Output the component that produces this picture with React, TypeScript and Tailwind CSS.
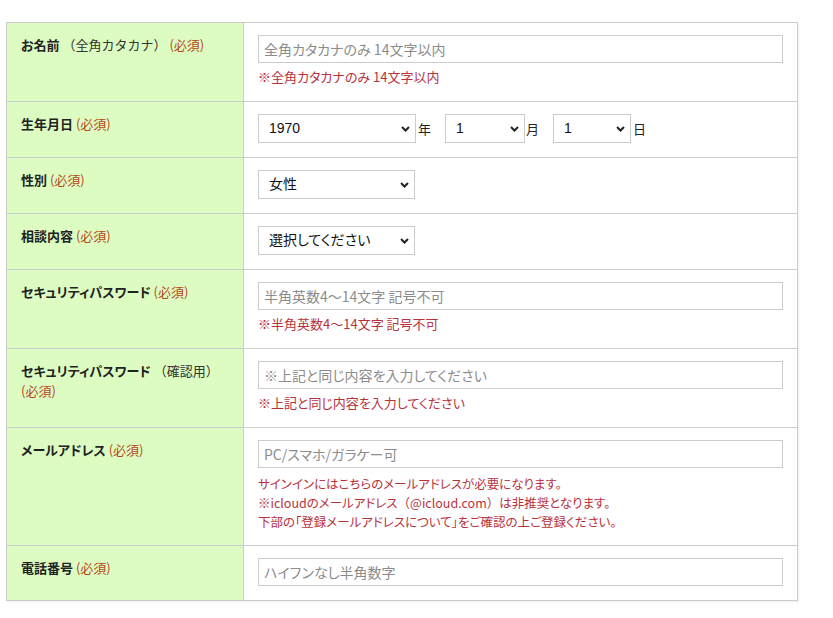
import { ReactNode } from "react";

const jp = "font-['Noto_Sans_CJK_JP',sans-serif] [font-feature-settings:'palt']";

function Required() {
  return <span className="whitespace-nowrap font-normal text-[#b5471f]"> (必須)</span>;
}

function Sub({ children }: { children: ReactNode }) {
  // full-width brackets keep their width here, like the original
  return <span className="font-normal text-[#333] [font-feature-settings:normal]">{children}</span>;
}

function Row({ label, children }: { label: ReactNode; children: ReactNode }) {
  return (
    <>
      <div className="border-r border-b border-[#cccccc] bg-[#dcfcc1] pl-[14px] pr-[14px] pt-[12px] text-[13px] leading-[20px] text-[#222] font-bold">
        {label}
      </div>
      <div className="border-r border-b border-[#cccccc] bg-white pl-[14px] pr-[14px] pt-[12px] pb-[14px]">
        {children}
      </div>
    </>
  );
}

function TextInput({ placeholder }: { placeholder: string }) {
  return (
    <input
      type="text"
      placeholder={placeholder}
      className={`${jp} block h-[28px] w-full border border-[#cccccc] bg-white px-[5px] text-[14px] text-[#333] outline-none placeholder:text-[#8c8c8c]`}
    />
  );
}

function Note({ children }: { children: ReactNode }) {
  return <p className="mt-[4px] text-[13px] leading-[20px] text-[#b8323c]">{children}</p>;
}

function Select({ value, options, width }: { value: string; options: string[]; width: string }) {
  return (
    <div className={`relative h-[29px] ${width}`}>
      <select
        defaultValue={value}
        className="h-full w-full appearance-none border border-[#cccccc] bg-white pl-[10px] pr-[18px] font-['Liberation_Sans','Noto_Sans_CJK_JP',sans-serif] text-[14px] text-[#111] outline-none"
      >
        {options.map((o) => (
          <option key={o}>{o}</option>
        ))}
      </select>
      <svg
        className="pointer-events-none absolute right-[6px] top-1/2 -translate-y-1/2"
        width="9"
        height="6"
        viewBox="0 0 9 6"
      >
        <polyline points="1,1 4.5,4.5 8,1" fill="none" stroke="#222" strokeWidth="2" />
      </svg>
    </div>
  );
}

export default function App() {
  const years = Array.from({ length: 60 }, (_, i) => String(1940 + i));
  const months = Array.from({ length: 12 }, (_, i) => String(i + 1));
  const days = Array.from({ length: 31 }, (_, i) => String(i + 1));

  return (
    <div className={`${jp} min-h-[618px] bg-white pt-[22px] pl-[6px]`}>
      <div className="grid w-[792px] grid-cols-[237px_554px] border-l border-t border-[#cccccc] shadow-[1px_1px_2px_rgba(0,0,0,0.06)]">
        <Row
          label={
            <>
              お名前 <Sub>（全角カタカナ）</Sub>
              <Required />
            </>
          }
        >
          <TextInput placeholder="全角カタカナのみ 14文字以内" />
          <Note>※全角カタカナのみ 14文字以内</Note>
        </Row>

        <Row
          label={
            <>
              生年月日
              <Required />
            </>
          }
        >
          <div className="flex items-center text-[13px] text-[#222]">
            <Select value="1970" options={years} width="w-[158px]" />
            <span className="ml-[2px] mr-[14px]">年</span>
            <Select value="1" options={months} width="w-[80px]" />
            <span className="ml-[1px] mr-[14px]">月</span>
            <Select value="1" options={days} width="w-[78px]" />
            <span className="ml-[2px]">日</span>
          </div>
        </Row>

        <Row
          label={
            <>
              性別
              <Required />
            </>
          }
        >
          <Select value="女性" options={["男性", "女性"]} width="w-[157px]" />
        </Row>

        <Row
          label={
            <>
              相談内容
              <Required />
            </>
          }
        >
          <Select value="選択してください" options={["選択してください", "恋愛", "仕事", "人間関係"]} width="w-[157px]" />
        </Row>

        <Row
          label={
            <>
              セキュリティパスワード
              <Required />
            </>
          }
        >
          <TextInput placeholder="半角英数4～14文字 記号不可" />
          <Note>※半角英数4～14文字 記号不可</Note>
        </Row>

        <Row
          label={
            <>
              セキュリティパスワード <Sub>（確認用）</Sub>
              <Required />
            </>
          }
        >
          <TextInput placeholder="※上記と同じ内容を入力してください" />
          <Note>※上記と同じ内容を入力してください</Note>
        </Row>

        <Row
          label={
            <>
              メールアドレス
              <Required />
            </>
          }
        >
          <TextInput placeholder="PC/スマホ/ガラケー可" />
          <div className="mt-[6px] text-[12.5px] leading-[19px] text-[#b8323c]">
            <p>サインインにはこちらのメールアドレスが必要になります。</p>
            <p>
              ※icloudのメールアドレス
              <span className="[font-feature-settings:normal]">（@icloud.com）</span>
              は非推奨となります。
            </p>
            <p>下部の「登録メールアドレスについて」をご確認の上ご登録ください。</p>
          </div>
        </Row>

        <Row
          label={
            <>
              電話番号
              <Required />
            </>
          }
        >
          <TextInput placeholder="ハイフンなし半角数字" />
        </Row>
      </div>
    </div>
  );
}
